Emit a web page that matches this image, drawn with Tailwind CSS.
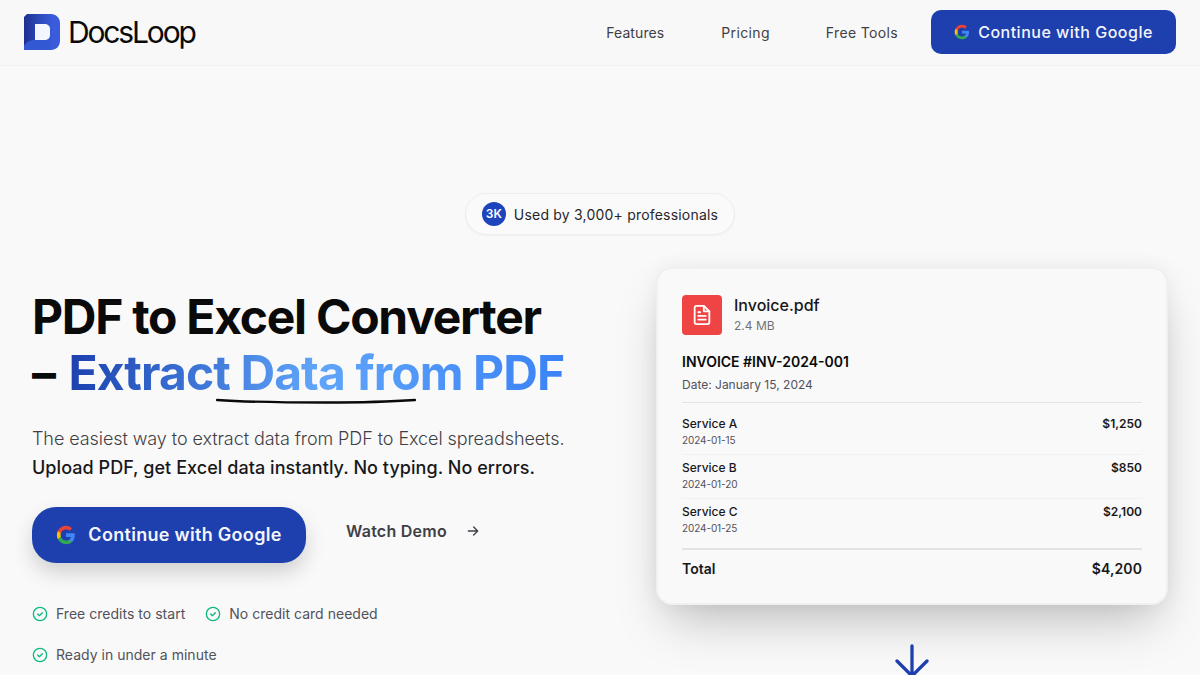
<!DOCTYPE html>
<html>
<head>
<meta charset="utf-8">
<script src="https://cdn.jsdelivr.net/npm/@tailwindcss/browser@4"></script>
</head>
<body class="h-[675px] overflow-hidden bg-[#f9f9f9] font-['Inter',sans-serif] text-[#0a0a0a]">
<header class="flex h-[66px] items-center justify-between border-b border-[#f0f0f2] bg-[#f8f8f8] pb-[1px] pl-6 pr-6">
  <div class="flex items-center gap-[8px]">
    <svg width="36" height="36" viewBox="0 0 36 36">
      <defs><linearGradient id="lg" x1="0" y1="0" x2="1" y2="0"><stop offset="0" stop-color="#1e2f8e"/><stop offset="0.4" stop-color="#2c49b8"/><stop offset="0.8" stop-color="#3a5cdc"/></linearGradient></defs>
      <path d="M3 0H27C32 0 36 4 36 9V27C36 32 32 36 27 36H0V3Z" fill="url(#lg)"/>
      <path d="M0 36V32C2 28 6 26 11 26H25V36Z" fill="#3358d4"/>
      <path d="M11 10H20C24 10 26 12 26 15V21C26 24 24 26 20 26H11Z" fill="#f4f6fd"/>
    </svg>
    <span class="text-[30px] font-normal leading-none tracking-[-2.15px] text-[#0a0a0a]">DocsLoop</span>
  </div>
  <nav class="flex items-center">
    <a class="mr-[57px] mt-[2px] text-sm font-normal tracking-[0.1px] text-[#3f3f46]">Features</a>
    <a class="mr-[56px] mt-[2px] text-sm font-normal tracking-[0.35px] text-[#3f3f46]">Pricing</a>
    <a class="mr-[33px] mt-[2px] text-sm font-normal tracking-[0.35px] text-[#3f3f46]">Free Tools</a>
    <a class="flex h-11 w-[245px] items-center justify-center gap-2 rounded-[10px] bg-[#1e3fae] text-base font-medium tracking-[0.5px] text-[#f3f5fb]">
      <svg width="16" height="16" viewBox="0 0 24 24"><path fill="#4285F4" d="M22.56 12.25c0-.78-.07-1.53-.2-2.25H12v4.26h5.92c-.26 1.37-1.04 2.53-2.21 3.31v2.77h3.57c2.08-1.92 3.28-4.74 3.28-8.09z"/><path fill="#34A853" d="M12 23c2.97 0 5.46-.98 7.28-2.66l-3.57-2.77c-.98.66-2.23 1.06-3.71 1.06-2.86 0-5.29-1.93-6.16-4.53H2.18v2.84C3.99 20.53 7.7 23 12 23z"/><path fill="#FBBC05" d="M5.84 14.09c-.22-.66-.35-1.36-.35-2.09s.13-1.43.35-2.09V7.07H2.18C1.43 8.55 1 10.22 1 12s.43 3.45 1.18 4.93l2.85-2.22.81-.62z"/><path fill="#EA4335" d="M12 5.38c1.62 0 3.06.56 4.21 1.64l3.15-3.15C17.45 2.09 14.97 1 12 1 7.7 1 3.99 3.47 2.18 7.07l3.66 2.84c.87-2.6 3.3-4.53 6.16-4.53z"/></svg>
      Continue with Google
    </a>
  </nav>
</header>
<main class="px-8 pt-[127px]">
  <div class="flex justify-center">
    <div class="flex h-[42px] w-[270px] items-center justify-center gap-2 rounded-full border border-[#eeeef0] bg-[#fafafa] shadow-[0_1px_2px_rgba(0,0,0,0.04)]">
      <span class="flex h-6 w-6 items-center justify-center rounded-full bg-[#1d43bd] text-xs font-semibold text-white">3K</span>
      <span class="pt-[2px] text-sm font-normal tracking-[0.2px] text-[#27272a]">Used by 3,000+ professionals</span>
    </div>
  </div>
  <div class="mt-[32px] flex justify-between">
    <section class="w-[560px] pt-[22px]">
      <h1 class="text-[48px] font-bold leading-[56px] text-[#0a0a0a]"><span class="tracking-[-1.27px]">PDF to Excel Converter</span><br>– <span class="relative ml-[1px] bg-gradient-to-r from-[#1e40af] via-[#60a5fa] to-[#3b82f6] bg-clip-text tracking-[-0.9px] text-transparent">Extract Data from PDF<svg class="absolute left-[148px] top-[54px]" width="200" height="8" viewBox="0 0 200 8" fill="none"><path d="M1 3C30 5 70 5.5 110 5.5C140 5.500 170 5 199 3" stroke="#0a0a0a" stroke-width="2.400" stroke-linecap="round"/></svg></span></h1>
      <p class="mt-[23px] text-lg font-light leading-[29px] text-[#3f3f46]"><span class="tracking-[-0.08px]">The easiest way to extract data from PDF to Excel spreadsheets.</span><br><span class="font-medium tracking-[0.05px] text-[#18181b]">Upload PDF, get Excel data instantly. No typing. No errors.</span></p>
      <div class="mt-[25px] flex items-start">
        <a class="flex h-14 w-[274px] items-center justify-center gap-3 rounded-[24px] bg-[#1e3fae] text-lg font-semibold tracking-[0.3px] text-[#f3f5fb] shadow-[0_10px_20px_rgba(0,0,0,0.16)]">
          <svg width="20" height="20" viewBox="0 0 24 24"><path fill="#4285F4" d="M22.56 12.25c0-.78-.07-1.53-.2-2.25H12v4.26h5.92c-.26 1.37-1.04 2.53-2.21 3.31v2.77h3.57c2.08-1.92 3.28-4.74 3.28-8.09z"/><path fill="#34A853" d="M12 23c2.97 0 5.46-.98 7.28-2.66l-3.57-2.77c-.98.66-2.23 1.06-3.71 1.06-2.86 0-5.29-1.93-6.16-4.53H2.18v2.84C3.99 20.53 7.7 23 12 23z"/><path fill="#FBBC05" d="M5.840 14.09c-.22-.66-.35-1.36-.35-2.09s.13-1.43.35-2.09V7.07H2.18C1.43 8.55 1 10.22 1 12s.43 3.45 1.18 4.93l2.85-2.22.81-.62z"/><path fill="#EA4335" d="M12 5.38c1.62 0 3.06.56 4.21 1.64l3.15-3.15C17.45 2.09 14.97 1 12 1 7.7 1 3.99 3.47 2.18 7.07l3.66 2.84c.87-2.6 3.3-4.53 6.16-4.53z"/></svg>
          Continue with Google
        </a>
        <a class="ml-10 mt-[12px] flex items-center gap-[18px] text-base font-semibold tracking-[0.25px] text-[#3f3f46]">Watch Demo
          <svg width="16" height="16" viewBox="0 0 24 24" fill="none" stroke="#3f3f46" stroke-width="2" stroke-linecap="round" stroke-linejoin="round"><path d="M5 12h14M13 6l6 6-6 6"/></svg>
        </a>
      </div>
      <ul class="mt-[40px] flex w-[420px] flex-wrap gap-x-[20px] gap-y-[20px] text-sm tracking-[0.02px] text-[#52525b]">
        <li class="flex h-[21px] items-center gap-2"><svg width="16" height="16" viewBox="0 0 24 24" fill="none" stroke="#10b981" stroke-width="2" stroke-linecap="round" stroke-linejoin="round"><circle cx="12" cy="12" r="10"/><path d="M8.500 12l2.500 2.500 4.500-4.500"/></svg>Free credits to start</li>
        <li class="flex h-[21px] items-center gap-2"><svg width="16" height="16" viewBox="0 0 24 24" fill="none" stroke="#10b981" stroke-width="2" stroke-linecap="round" stroke-linejoin="round"><circle cx="12" cy="12" r="10"/><path d="M8.500 12l2.500 2.500 4.500-4.500"/></svg>No credit card needed</li>
        <li class="flex h-[21px] items-center gap-2"><svg width="16" height="16" viewBox="0 0 24 24" fill="none" stroke="#10b981" stroke-width="2" stroke-linecap="round" stroke-linejoin="round"><circle cx="12" cy="12" r="10"/><path d="M8.500 12l2.500 2.500 4.500-4.500"/></svg>Ready in under a minute</li>
      </ul>
    </section>
    <section class="w-[512px]">
      <div class="h-[338px] rounded-2xl border-2 border-[#eff0f2] bg-[#f9f9f9] px-6 pt-[25px] shadow-[0_25px_50px_-12px_rgba(0,0,0,0.25),0_0_20px_rgba(0,0,0,0.05)]">
        <div class="flex items-center gap-3">
          <span class="flex h-10 w-10 items-center justify-center rounded-[4px] bg-[#ef4444]">
            <svg width="22" height="22" viewBox="0 0 24 24" fill="none" stroke="white" stroke-width="2" stroke-linecap="round" stroke-linejoin="round"><path d="M14 2H6a2 2 0 0 0-2 2v16a2 2 0 0 0 2 2h12a2 2 0 0 0 2-2V8z"/><path d="M14 2v6h6M8 13h8M8 17h8M8 9h2"/></svg>
          </span>
          <div>
            <div class="text-base font-medium leading-[22px] text-[#18181b]">Invoice.pdf</div>
            <div class="text-xs leading-[19px] text-[#71717a]">2.4 MB</div>
          </div>
        </div>
        <div class="mt-[15px] text-sm font-semibold leading-[24px] text-[#0a0a0a]">INVOICE #INV-2024-001</div>
        <div class="mt-[1px] border-b border-[#e4e4e7] pb-[7px] text-xs leading-[20px] text-[#52525b]">Date: January 15, 2024</div>
        <div class="flex h-[52px] justify-between border-b border-[#f1f1f3] pt-[12px]"><div><div class="text-xs font-medium leading-[18px] text-[#18181b]">Service A</div><div class="text-[10px] leading-[15px] tracking-[-0.1px] text-[#52525b]">2024-01-15</div></div><div class="text-xs font-semibold leading-[18px] text-[#18181b]">$1,250</div></div>
        <div class="flex h-[44px] justify-between border-b border-[#f1f1f3] pt-[4px]"><div><div class="text-xs font-medium leading-[18px] text-[#18181b]">Service B</div><div class="text-[10px] leading-[15px] tracking-[-0.1px] text-[#52525b]">2024-01-20</div></div><div class="text-xs font-semibold leading-[18px] text-[#18181b]">$850</div></div>
        <div class="flex h-[51px] justify-between border-b-2 border-[#e4e4e7] pt-[4px]"><div><div class="text-xs font-medium leading-[18px] text-[#18181b]">Service C</div><div class="text-[10px] leading-[15px] tracking-[-0.1px] text-[#52525b]">2024-01-25</div></div><div class="text-xs font-semibold leading-[18px] text-[#18181b]">$2,100</div></div>
        <div class="mt-[9px] flex items-center justify-between"><span class="text-sm font-semibold text-[#18181b]">Total</span><span class="text-sm font-semibold tracking-[0.1px] text-[#18181b]">$4,200</span></div>
      </div>
      <div class="mt-[39px] flex justify-center">
        <svg width="40" height="40" viewBox="0 0 40 40" fill="none" stroke="#1e40af" stroke-width="3.300" stroke-linecap="round" stroke-linejoin="round"><path d="M20 2V32M5 17l15 15 15-15"/></svg>
      </div>
    </section>
  </div>
</main>
</body>
</html>
